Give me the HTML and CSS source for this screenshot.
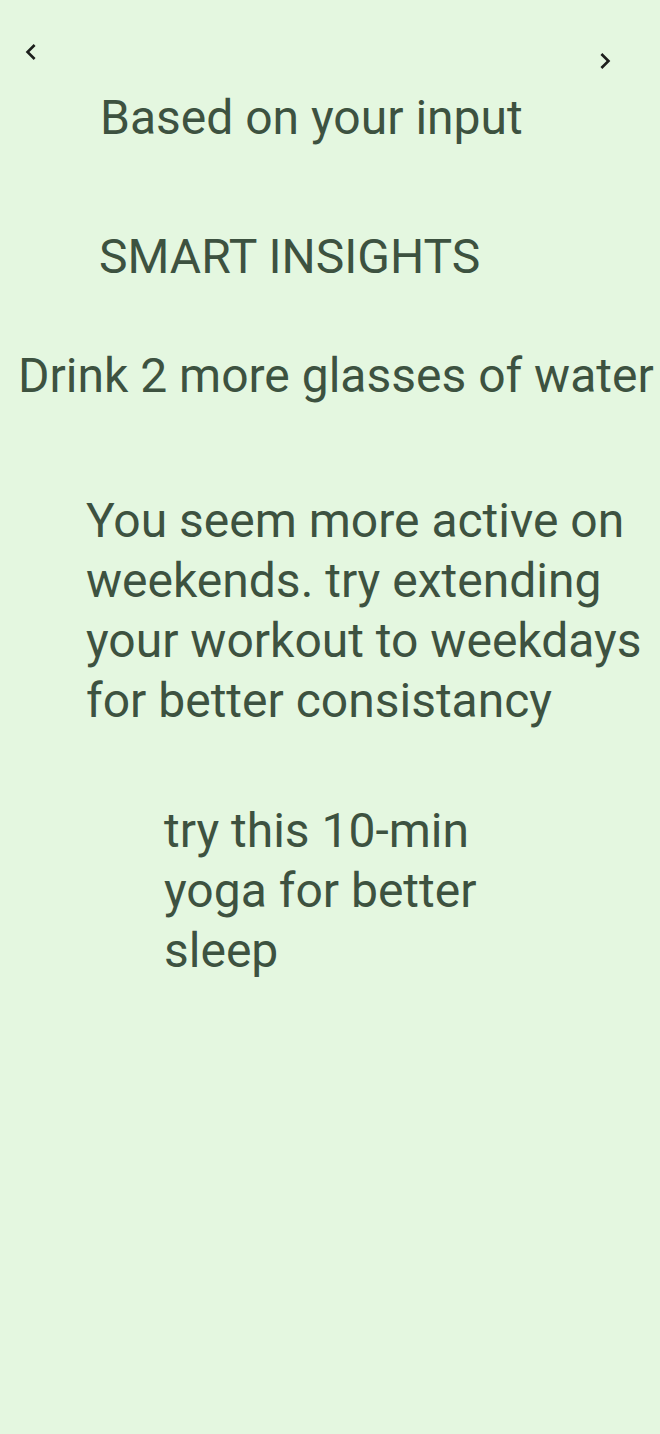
FILE: index.html
```html
<!DOCTYPE html>
<html lang="en">
<head>
<meta charset="utf-8">
<title>Smart Insights</title>
<link rel="stylesheet" href="styles.css">
</head>
<body>
<div class="screen">
  <div class="topbar">
    <svg class="nav nav-back" width="32" height="32" viewBox="0 0 24 24"><path d="M15.41 7.41L14 6l-6 6 6 6 1.41-1.41L10.83 12z"/></svg>
    <svg class="nav nav-next" width="32" height="32" viewBox="0 0 24 24"><path d="M10 6L8.59 7.41 13.17 12l-4.58 4.59L10 18l6-6z"/></svg>
  </div>
  <div class="subtitle">Based on your input</div>
  <div class="title">SMART INSIGHTS</div>
  <div class="tip-water">Drink 2 more glasses of water</div>
  <div class="tip-active">You seem more active on weekends. try extending your workout to weekdays for better consistancy</div>
  <div class="tip-yoga">try this 10-min yoga for better sleep</div>
</div>
</body>
</html>
```

FILE: styles.css
```css
html, body {
  margin: 0;
  padding: 0;
  background: #e4f7e0;
}
.screen {
  width: 660px;
  min-height: 1434px;
  background: #e4f7e0;
  color: #3d5240;
  font-family: Roboto, "Noto Sans", sans-serif;
  font-size: 48px;
  line-height: 60px;
  display: flex;
  flex-direction: column;
}
.topbar {
  height: 88px;
  display: flex;
  justify-content: space-between;
  align-items: flex-start;
}
.nav {
  fill: #1c1f1c;
}
.nav-back {
  margin-left: 15px;
  margin-top: 36px;
}
.nav-next {
  margin-right: 39px;
  margin-top: 45px;
}
.subtitle {
  padding-left: 100px;
}
.title {
  margin-top: 79px;
  padding-left: 99px;
}
.tip-water {
  margin-top: 59px;
  padding-left: 18px;
  white-space: nowrap;
}
.tip-active {
  margin-top: 85px;
  margin-left: 86px;
  width: 564px;
}
.tip-yoga {
  margin-top: 70px;
  margin-left: 164px;
  width: 330px;
}
```
